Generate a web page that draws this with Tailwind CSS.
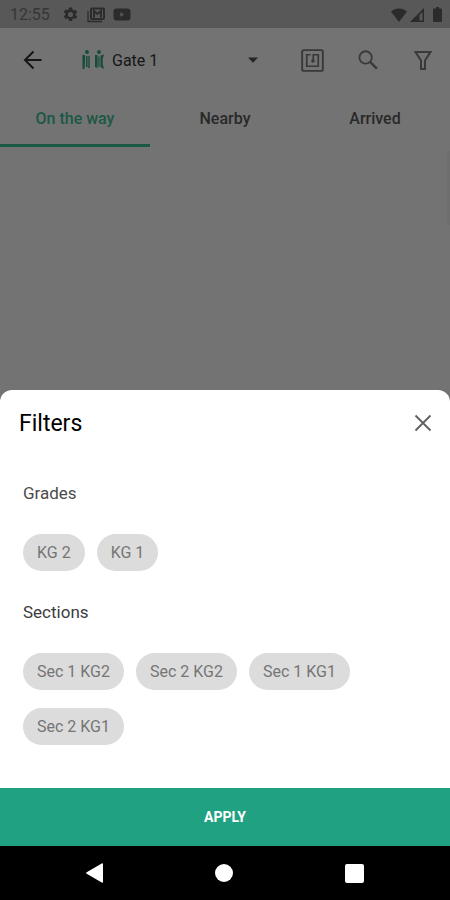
<!DOCTYPE html>
<html lang="en">
<head>
<meta charset="utf-8">
<meta name="viewport" content="width=device-width, initial-scale=1">
<title>Filters</title>
<script src="https://cdn.jsdelivr.net/npm/@tailwindcss/browser@4"></script>
</head>
<body class="flex min-h-screen flex-col bg-[#737373] font-['Roboto',sans-serif] text-base text-[#161616]">
  <!-- Status bar -->
  <div class="flex h-7 items-center justify-between bg-[#585858] pt-px pr-2 pl-[10px] text-[#2b2b2b]">
    <div class="flex items-center">
      <span class="w-[52px] text-[16px] leading-6 text-[#363636]">12:55</span>
      <svg class="size-[17px]" viewBox="0 0 24 24" fill="currentColor" aria-hidden="true"><path d="M19.14 12.94c.04-.3.06-.61.06-.94s-.02-.64-.07-.94l2.03-1.58a.49.49 0 0 0 .12-.61l-1.92-3.32a.49.49 0 0 0-.59-.22l-2.39.96a7 7 0 0 0-1.62-.94l-.36-2.54A.48.48 0 0 0 13.92 2h-3.84a.48.48 0 0 0-.47.41l-.36 2.54c-.59.24-1.13.57-1.62.94l-2.39-.96a.48.48 0 0 0-.59.22L2.74 8.47a.48.48 0 0 0 .12.61l2.03 1.58c-.05.3-.09.63-.09.94s.02.64.07.94l-2.03 1.58a.49.49 0 0 0-.12.61l1.92 3.32c.12.22.37.29.59.22l2.39-.96c.5.38 1.03.7 1.62.94l.36 2.54c.05.24.24.41.48.41h3.84c.24 0 .44-.17.47-.41l.36-2.54c.59-.24 1.13-.56 1.62-.94l2.39.96c.22.08.47 0 .59-.22l1.92-3.32a.48.48 0 0 0-.12-.61zM12 15.6a3.6 3.6 0 1 1 0-7.2 3.6 3.6 0 0 1 0 7.2z"/></svg>
      <svg class="ml-2 h-4 w-[18px]" viewBox="0 0 18 16" fill="none" stroke="currentColor" aria-hidden="true"><path d="M1 4v10.500h14" stroke-width="1.300"/><rect x="4" y="1.500" width="13" height="10.500" rx="1" stroke-width="2"/><path d="M7 10.500V4l3.500 3L14 4v6.500" stroke-width="2"/></svg>
      <svg class="ml-2 h-[13px] w-[18px]" viewBox="0 0 18 13" aria-hidden="true"><path fill="currentColor" fill-rule="evenodd" d="M3.500.500h11a3 3 0 0 1 3 3v6a3 3 0 0 1-3 3h-11a3 3 0 0 1-3-3v-6a3 3 0 0 1 3-3zM7.300 4.300v4.400l4-2.200z"/></svg>
    </div>
    <div class="flex items-center gap-[3px]">
      <svg class="h-[14px] w-4" viewBox="0 0 16 14" fill="currentColor" aria-hidden="true"><path d="M0 3.500C4.500-.600 11.500-.600 16 3.500L8 14z"/></svg>
      <svg class="size-[14px]" viewBox="0 0 14 14" aria-hidden="true"><path d="M0 14 14 0v14z" fill="currentColor"/><path d="M9.500 7 12.500 4v8.500h-3z" fill="#585858"/></svg>
      <svg class="ml-[6px] h-[15px] w-[9px]" viewBox="0 0 9 15" fill="currentColor" aria-hidden="true"><path d="M3 0h3v1.500h2a1 1 0 0 1 1 1V14a1 1 0 0 1-1 1H1a1 1 0 0 1-1-1V2.500a1 1 0 0 1 1-1h2z"/></svg>
    </div>
  </div>

  <!-- Toolbar -->
  <header class="flex h-16 items-center pr-[18px] pl-[23px]">
    <button type="button" aria-label="Back"><svg class="h-5 w-[19px]" viewBox="0 0 19 20" fill="none" stroke="currentColor" stroke-width="2" aria-hidden="true"><path d="M18.500 10H2.500M10.500 1.500 2 10l8.500 8.500"/></svg></button>
    <div class="relative ml-10 flex flex-1 items-center">
      <svg class="h-5 w-[22px]" viewBox="0 0 22 20" fill="#154b39" aria-hidden="true"><circle cx="5" cy="2" r="1.900"/><circle cx="17" cy="2" r="1.900"/><path d="M.500 5h2.500v5L2.500 19H.500zM4 6h1.500v11H4zM6.300 6.500l1.400-1V18H6.300zM13 5h2.500v13L13 17zM16.300 6.500h1.200V17h-1.200zM18.500 5.500 22 4.500 20.700 9v5l1.300 5-3.500-2z"/></svg>
      <select aria-label="Gate" class="ml-2 min-w-0 flex-1 appearance-none bg-transparent pt-px text-base text-[#161616]"><option>Gate 1</option></select>
      <svg class="pointer-events-none absolute right-[43px] h-[6px] w-[10px]" viewBox="0 0 10 6" fill="#252525" aria-hidden="true"><path d="M0 .500h10L5 5.800z"/></svg>
    </div>
    <div class="flex items-center text-[#393939]">
      <button type="button" aria-label="Scan NFC tag"><svg class="size-[23px]" viewBox="0 0 24 24" fill="none" stroke="currentColor" aria-hidden="true"><rect x="1.200" y="1.200" width="21.600" height="21.600" rx="1.800" stroke-width="2"/><path d="M10 6H6v12h12V6h-5.200v6" stroke-width="1.800"/><circle cx="12.500" cy="12.500" r="1.900" fill="currentColor" stroke="none"/></svg></button>
      <button type="button" aria-label="Search" class="ml-[34px]"><svg class="size-5" viewBox="0 0 21 21" fill="none" stroke="currentColor" aria-hidden="true"><circle cx="8" cy="7.800" r="6.500" stroke-width="1.900"/><path d="m12.800 12.600 7 7" stroke-width="2.500"/></svg></button>
      <button type="button" aria-label="Filter" class="ml-9"><svg class="h-5 w-[18px]" viewBox="0 0 18 20" fill="none" stroke="currentColor" stroke-width="2" aria-hidden="true"><path d="M1.500 2h15l-5.500 8.500V19H7v-8.500z"/></svg></button>
    </div>
  </header>

  <!-- Tabs -->
  <nav class="grid h-[55px] grid-cols-3 font-medium text-[#292929]" role="tablist" aria-label="Pickup status">
    <button type="button" role="tab" aria-selected="true" class="border-b-3 border-[#1b5846] pt-px text-[#1b5846]">On the way</button>
    <button type="button" role="tab" aria-selected="false" class="border-b-3 border-transparent pt-px">Nearby</button>
    <button type="button" role="tab" aria-selected="false" class="border-b-3 border-transparent pt-px">Arrived</button>
  </nav>

  <!-- Dimmed content with the edge of the scroll thumb -->
  <main class="flex flex-1 justify-end pt-1"><div class="h-[74px] w-[3px] rounded-l-sm bg-[#6e6e6e]"></div></main>

  <!-- Filter sheet -->
  <section class="rounded-t-xl bg-white" role="dialog" aria-labelledby="sheet-title">
    <div class="flex h-[66px] items-center justify-between pr-[18px] pl-[19px]">
      <h2 id="sheet-title" class="pt-[2px] text-[23px] leading-8 text-black">Filters</h2>
      <button type="button" aria-label="Close"><svg class="size-[18px]" viewBox="0 0 18 18" fill="none" stroke="#606060" stroke-width="1.800" aria-hidden="true"><path d="m1.500 1.500 15 15m0-15-15 15"/></svg></button>
    </div>
    <div class="px-[23px] pt-[25px] pb-[43px]">
      <h3 class="text-[17px] leading-6 text-[#4c4c4c]">Grades</h3>
      <div class="mt-[29px] flex flex-wrap gap-x-3 gap-y-[18px] text-[#757575]">
        <button type="button" class="h-[37px] rounded-full bg-[#dcdcdc] px-[14px]">KG 2</button>
        <button type="button" class="h-[37px] rounded-full bg-[#dcdcdc] px-[14px]">KG 1</button>
      </div>
      <h3 class="mt-[29px] text-[17px] leading-6 text-[#3c3c3c]">Sections</h3>
      <div class="mt-[29px] flex flex-wrap gap-x-3 gap-y-[18px] text-[#757575]">
        <button type="button" class="h-[37px] rounded-full bg-[#dcdcdc] px-[14px]">Sec 1 KG2</button>
        <button type="button" class="h-[37px] rounded-full bg-[#dcdcdc] px-[14px]">Sec 2 KG2</button>
        <button type="button" class="h-[37px] rounded-full bg-[#dcdcdc] px-[14px]">Sec 1 KG1</button>
        <button type="button" class="h-[37px] rounded-full bg-[#dcdcdc] px-[14px]">Sec 2 KG1</button>
      </div>
    </div>
    <button type="button" class="block h-[58px] w-full bg-[#20a181] text-[14px] font-bold text-white">APPLY</button>
  </section>

  <!-- System navigation -->
  <footer class="flex h-[54px] items-center justify-between bg-black px-[86px] text-white">
    <button type="button" aria-label="System back"><svg class="h-5 w-[17px]" viewBox="0 0 17 20" fill="currentColor" aria-hidden="true"><path d="M.700 9.300 15.700.500q1.300-.600 1.300.800v17.400q0 1.400-1.300.800L.700 10.700q-1.200-.700 0-1.400z"/></svg></button>
    <button type="button" aria-label="Home" class="size-[18px] rounded-full bg-white"></button>
    <button type="button" aria-label="Recent apps" class="size-[19px] rounded-[2px] bg-white"></button>
  </footer>
</body>
</html>
